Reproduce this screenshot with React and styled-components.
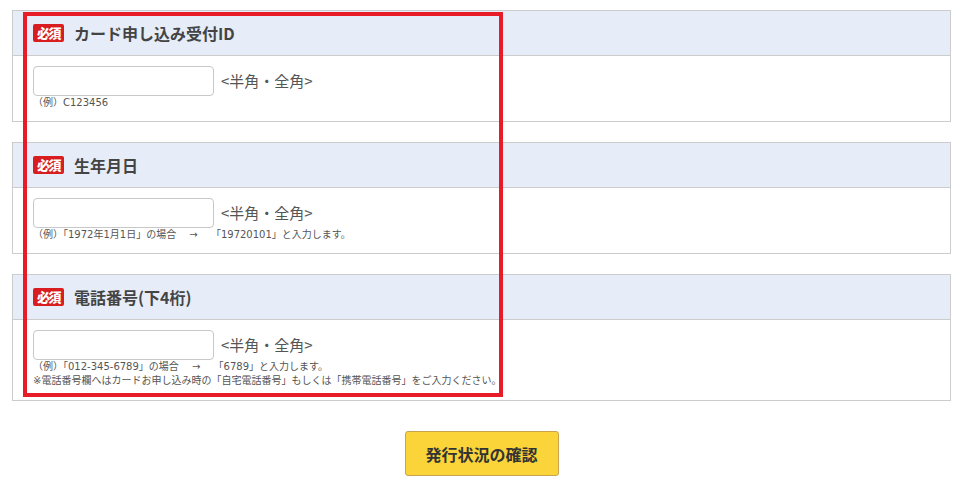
import styled, { createGlobalStyle } from "styled-components";

const GlobalStyle = createGlobalStyle`
    body {
        margin: 0;
        background: #ffffff;
        font-family: "DejaVu Sans", "Noto Sans CJK JP", sans-serif;
        color: #444444;
    }
`;

const Page = styled.div`
    position: relative;
    width: 939px;
    padding: 10px 0 0 12px;
`;

const CardList = styled.div`
    display: flex;
    flex-direction: column;
    gap: 20px;
`;

const Card = styled.section`
    border: 1px solid #cccccc;
    background: #ffffff;
`;

const CardHeader = styled.div`
    display: flex;
    align-items: center;
    gap: 10px;
    height: 44px;
    padding-left: 20px;
    background: #e6edf8;
    border-bottom: 1px solid #cccccc;
`;

const Badge = styled.span`
    display: inline-flex;
    align-items: center;
    justify-content: center;
    width: 31px;
    height: 18px;
    border-radius: 2px;
    background: #d81c1f;
    color: #ffffff;
    font-family: "Noto Sans CJK JP", sans-serif;
    font-size: 13px;
    font-weight: 900;
    letter-spacing: -1.5px;
    line-height: 18px;
`;

const Title = styled.h2`
    margin: 0;
    font-family: "Noto Sans CJK JP", sans-serif;
    font-size: 16px;
    font-weight: 700;
    color: #444444;
    line-height: 20px;
`;

const CardBody = styled.div`
    padding: 10px 20px ${(p) => p.$bottom || 11}px 20px;
`;

const InputRow = styled.div`
    display: flex;
    align-items: center;
    gap: 7px;
`;

const TextInput = styled.input`
    box-sizing: border-box;
    width: 181px;
    height: 30px;
    border: 1px solid #c8c8c8;
    border-radius: 4px;
    padding: 0 6px;
    background: #ffffff;
`;

const Hint = styled.span`
    font-family: "Noto Sans CJK JP", sans-serif;
    font-size: 15px;
    color: #555555;
    line-height: 20px;
`;

const Note = styled.p`
    margin: 0;
    font-family: "DejaVu Sans", "Noto Sans CJK JP", sans-serif;
    font-size: 10px;
    line-height: 14px;
    color: #555555;
    white-space: pre;
`;

const ButtonRow = styled.div`
    display: flex;
    justify-content: center;
    margin-top: 30px;
`;

const SubmitButton = styled.button`
    width: 154px;
    height: 45px;
    border: 1px solid #c9a24e;
    border-radius: 3px;
    background: #fad438;
    font-family: "Noto Sans CJK JP", sans-serif;
    font-size: 16px;
    font-weight: 700;
    color: #333333;
    cursor: pointer;
`;

const Highlight = styled.div`
    position: absolute;
    left: 23px;
    top: 12px;
    width: 472px;
    height: 377px;
    border: 4px solid #e81c26;
    pointer-events: none;
`;

const fields = [
    {
        title: "カード申し込み受付ID",
        notes: ["（例）C123456"],
    },
    {
        title: "生年月日",
        notes: ["（例）「1972年1月1日」の場合　 →　 「19720101」と入力します。"],
    },
    {
        title: "電話番号(下4桁)",
        notes: [
            "（例）「012-345-6789」の場合　 →　 「6789」と入力します。",
            "※電話番号欄へはカードお申し込み時の「自宅電話番号」もしくは「携帯電話番号」をご入力ください。",
        ],
        bottom: 12,
    },
];

function App() {
    return (
        <>
            <GlobalStyle />
            <Page>
                <CardList>
                    {fields.map((f) => (
                        <Card key={f.title}>
                            <CardHeader>
                                <Badge>必須</Badge>
                                <Title>{f.title}</Title>
                            </CardHeader>
                            <CardBody $bottom={f.bottom}>
                                <InputRow>
                                    <TextInput type="text" />
                                    <Hint>&lt;半角・全角&gt;</Hint>
                                </InputRow>
                                {f.notes.map((n, i) => (
                                    <Note key={i}>{n}</Note>
                                ))}
                            </CardBody>
                        </Card>
                    ))}
                </CardList>
                <ButtonRow>
                    <SubmitButton type="button">発行状況の確認</SubmitButton>
                </ButtonRow>
                <Highlight />
            </Page>
        </>
    );
}

export default App;
